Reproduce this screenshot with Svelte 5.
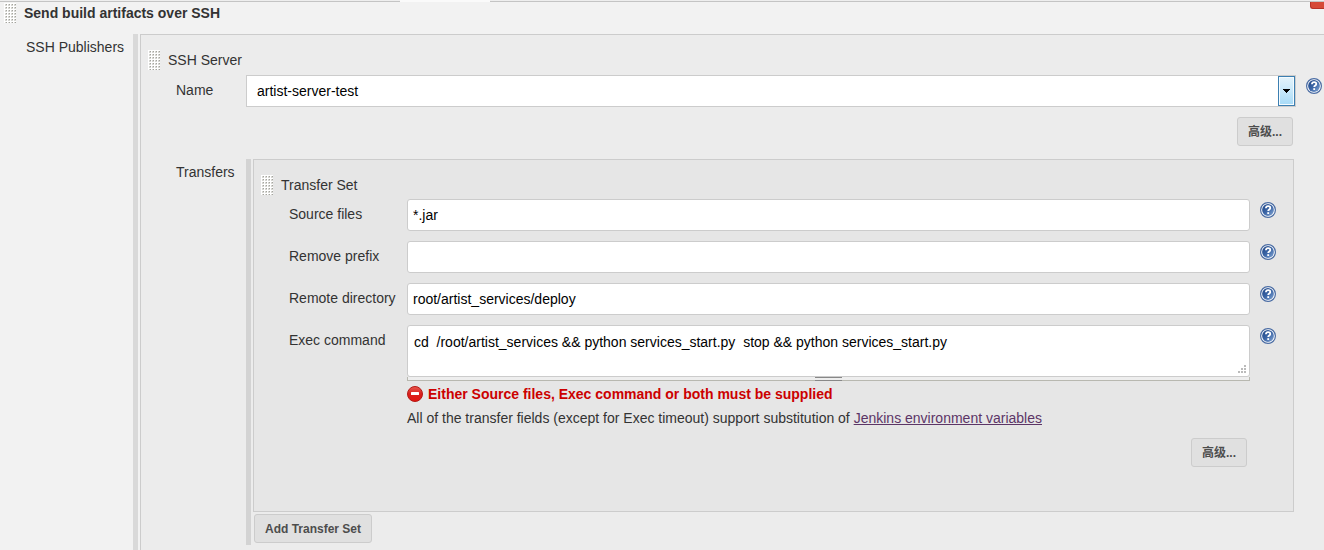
<script>
  let server = $state('artist-server-test');
  let command = $state('cd  /root/artist_services && python services_start.py  stop && python services_start.py');
  let fields = $state([
    { id: 'source-files', label: 'Source files', value: '*.jar' },
    { id: 'remove-prefix', label: 'Remove prefix', value: '' },
    { id: 'remote-directory', label: 'Remote directory', value: 'root/artist_services/deploy' }
  ]);
</script>

{#snippet grip()}
  <svg class="grip" viewBox="0 0 12 20" width="12" height="20" shape-rendering="crispEdges" aria-hidden="true">
    <rect width="12" height="20" fill="#fff" />
    {#each [1, 4, 7, 10, 13, 16, 19] as y}
      {#each [1, 4, 7, 10] as x}
        <rect {x} {y} width="2" height="2" fill="#d6d6d2" />
        <rect x={x + 1} {y} width="1" height="1" fill="#a4a49e" />
      {/each}
    {/each}
  </svg>
{/snippet}

{#snippet help(topic)}
  <button type="button" class="help" aria-label="Help for {topic}">
    <svg viewBox="0 0 16 16" width="16" height="16" aria-hidden="true">
      <defs>
        <linearGradient id="help-blue" x1="0" y1="0" x2="1" y2="1">
          <stop offset="0" stop-color="#1f4585" />
          <stop offset="0.5" stop-color="#3c66a6" />
          <stop offset="1" stop-color="#86a8d6" />
        </linearGradient>
      </defs>
      <circle cx="8" cy="8" r="7.4" fill="#fff" stroke="#4a6ca3" stroke-width="1.2" />
      <circle cx="8" cy="8" r="5.9" fill="url(#help-blue)" />
      <path d="M5.9 6.3C6 4.8 6.9 4.2 8.1 4.2c1.3 0 2.2.7 2.2 1.8 0 1.5-2.1 1.5-2.1 3.1" fill="none" stroke="#fff" stroke-width="1.8" />
      <rect x="7.3" y="10.2" width="1.8" height="1.8" fill="#fff" />
    </svg>
  </button>
{/snippet}

<main>
  <div class="tabs" aria-hidden="true"><i></i><b></b><i></i></div>
  <header>
    {@render grip()}
    <h1>Send build artifacts over SSH</h1>
    <button type="button" class="remove" aria-label="Remove"></button>
  </header>

  <section class="publishers">
    <div class="side">SSH Publishers</div>
    <div class="bar"></div>
    <div class="panel outer">
      <div class="heading">{@render grip()}<span>SSH Server</span></div>

      <div class="server">
        <label for="server">Name</label>
        <div class="select">
          <select id="server" bind:value={server}>
            <option>artist-server-test</option>
          </select>
          <span class="arrow" aria-hidden="true">
            <svg viewBox="0 0 7 4" width="7" height="4" shape-rendering="crispEdges"><path d="M0 0h7v1h-1v1h-1v1h-1v1h-1v-1h-1v-1h-1v-1h-1z" /></svg>
          </span>
        </div>
        {@render help('Name')}
      </div>

      <div class="actions"><button type="button" class="btn">高级...</button></div>

      <div class="transfers">
        <div class="label">Transfers</div>
        <div class="bar dark"></div>
        <div class="sets">
          <div class="panel inner">
            <div class="heading">{@render grip()}<span>Transfer Set</span></div>
            <div class="fields">
              {#each fields as field (field.id)}
                <label for={field.id}>{field.label}</label>
                <input id={field.id} type="text" bind:value={field.value} />
                {@render help(field.label)}
              {/each}
              <label for="exec-command">Exec command</label>
              <div class="command">
                <textarea id="exec-command" spellcheck="false" bind:value={command}></textarea>
                <svg class="corner" viewBox="0 0 8 8" width="8" height="8" aria-hidden="true" fill="#bbb" shape-rendering="crispEdges">
                  <path d="M6 0h2v2h-2zM3 3h2v2h-2zM6 3h2v2h-2zM0 6h2v2h-2zM3 6h2v2h-2zM6 6h2v2h-2z" />
                </svg>
                <div class="resizer"><span></span></div>
                <p class="error">
                  <svg viewBox="0 0 16 16" width="16" height="16" aria-hidden="true">
                    <defs>
                      <linearGradient id="error-red" x1="0" y1="0" x2="0" y2="1">
                        <stop offset="0" stop-color="#e8574d" />
                        <stop offset="0.5" stop-color="#d9201c" />
                        <stop offset="1" stop-color="#e5140f" />
                      </linearGradient>
                    </defs>
                    <circle cx="8" cy="8" r="7.5" fill="url(#error-red)" stroke="#b31b17" />
                    <rect x="4" y="6" width="8" height="3" rx="0.5" fill="#fff" />
                  </svg>
                  <strong>Either Source files, Exec command or both must be supplied</strong>
                </p>
                <p class="note">
                  All of the transfer fields (except for Exec timeout) support substitution of <a href="#env">Jenkins environment variables</a>
                </p>
              </div>
              {@render help('Exec command')}
            </div>
            <div class="actions"><button type="button" class="btn">高级...</button></div>
          </div>
          <button type="button" class="btn add">Add Transfer Set</button>
        </div>
      </div>
    </div>
  </section>
</main>

<style>
  :global(body) {
    margin: 0;
    background: #f2f2f2;
  }
  main, main * {
    box-sizing: border-box;
  }
  main {
    display: flex;
    flex-direction: column;
    min-height: 100vh;
    font: 14px/20px "Liberation Sans", Arial, "Noto Sans CJK SC", sans-serif;
    color: #333;
  }
  .tabs {
    display: flex;
    height: 2px;
  }
  .tabs i {
    width: 400px;
    background: #eee;
    border-bottom: 1px solid #c4c4c4;
  }
  .tabs b {
    width: 90px;
    background: #fafafa;
  }
  .tabs i:last-child {
    flex: 1;
  }
  header {
    display: flex;
    align-items: flex-start;
    gap: 8px;
    height: 32px;
    padding: 1px 0 0 4px;
  }
  h1 {
    flex: 1;
    margin: 0;
    font-size: 14px;
    line-height: 20px;
  }
  .grip {
    display: block;
    flex: none;
  }
  .remove {
    width: 14px;
    height: 7px;
    margin-top: -1px;
    padding: 0;
    border: 1px solid #b83227;
    border-width: 0 0 1px 1px;
    border-radius: 0 0 0 3px;
    background: #d64937;
  }
  .publishers {
    display: flex;
    flex: 1;
  }
  .side {
    width: 133px;
    padding: 3px 0 0 26px;
    white-space: nowrap;
  }
  .bar {
    flex: none;
    width: 5px;
    margin-right: 2px;
    background: #d9d9d9;
  }
  .bar.dark {
    background: #d3d3d3;
  }
  .panel {
    border: 1px solid #ccc;
  }
  .outer {
    flex: 1;
    min-width: 0;
    padding: 15px 0 5px;
    border-width: 1px 0 0 1px;
    background: #ececec;
  }
  .heading {
    display: flex;
    gap: 8px;
    padding-left: 7px;
  }
  .server {
    display: grid;
    grid-template-columns: 70px 1fr 16px;
    margin-top: 5px;
    padding: 0 2px 0 35px;
  }
  .server label {
    padding-top: 5px;
  }
  .select {
    position: relative;
    height: 32px;
    margin-right: 10px;
  }
  select, input, textarea {
    display: block;
    width: 100%;
    margin: 0;
    border: 1px solid #ccc;
    background: #fff;
    color: #000;
    font: inherit;
  }
  select {
    height: 32px;
    padding: 0 20px 0 10px;
    appearance: none;
  }
  .arrow {
    position: absolute;
    top: 1px;
    right: 1px;
    display: grid;
    place-items: center;
    width: 17px;
    height: 30px;
    border: 1px solid #3c7fb1;
    box-shadow: inset 0 0 0 1px #f4fbff;
    background: linear-gradient(#e4f3fb, #c7e8fa 50%, #a6daf7);
    pointer-events: none;
  }
  .help {
    display: block;
    width: 16px;
    height: 16px;
    margin-top: 3px;
    padding: 0;
    border: 0;
    background: none;
  }
  .help svg, .error svg {
    display: block;
    flex: none;
  }
  .actions {
    display: flex;
    justify-content: flex-end;
    margin-top: 10px;
    padding-right: 31px;
  }
  .btn {
    height: 29px;
    padding: 0 10px;
    border: 1px solid #ccc;
    border-radius: 3px;
    background: #e0e0e0;
    color: #4d4d4d;
    font: bold 12px/20px "Liberation Sans", Arial, "Noto Sans CJK SC", sans-serif;
  }
  .transfers {
    display: flex;
    margin-top: 13px;
    padding: 0 30px 0 35px;
  }
  .transfers .label {
    width: 70px;
    padding-top: 3px;
  }
  .sets {
    flex: 1;
    min-width: 0;
    padding-bottom: 2px;
  }
  .inner {
    padding: 15px 0 44px;
    background: #e6e6e6;
  }
  .fields {
    display: grid;
    grid-template-columns: 108px 1fr 16px;
    gap: 10px;
    margin-top: 4px;
    padding: 0 17px 0 35px;
  }
  .fields label {
    padding-top: 5px;
    white-space: nowrap;
  }
  .fields input {
    height: 32px;
    padding: 0 5px;
    border-radius: 3px;
  }
  .command {
    position: relative;
  }
  textarea {
    height: 52px;
    padding: 6px;
    border-radius: 3px;
    resize: none;
    overflow: hidden;
  }
  .corner {
    position: absolute;
    top: 40px;
    right: 4px;
  }
  .resizer {
    display: flex;
    justify-content: center;
    height: 4px;
    border: 1px solid #b8b8b0;
    border-top: 0;
    background: #eee;
  }
  .resizer span {
    width: 27px;
    height: 4px;
    border: 1px solid #888;
    border-width: 1px 0;
  }
  .error, .note {
    margin: 0;
  }
  .error {
    display: flex;
    align-items: center;
    gap: 5px;
    margin-top: 3px;
    color: #c00;
  }
  .note {
    margin-top: 4px;
  }
  .note a {
    color: #5c3566;
  }
  .inner .actions {
    padding-right: 46px;
  }
  .add {
    display: block;
    margin: 2px 0 0 1px;
  }
</style>
